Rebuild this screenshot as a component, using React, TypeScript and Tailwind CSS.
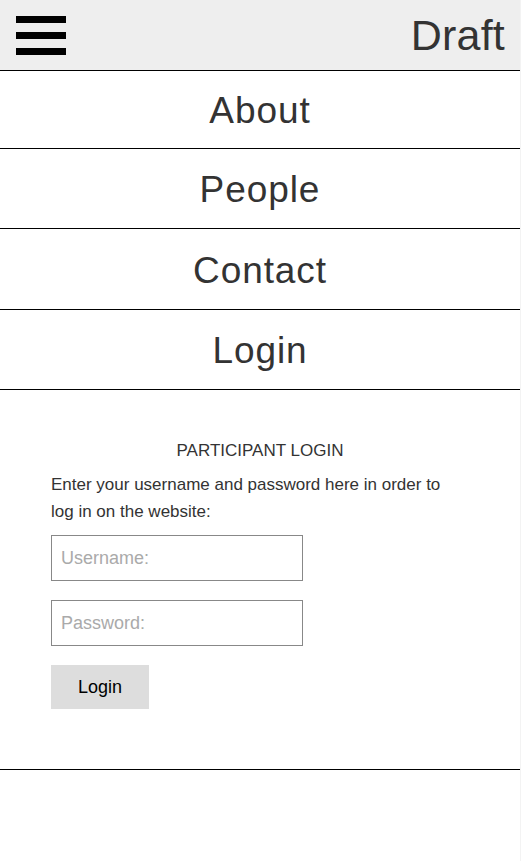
import React from 'react';

const navItems = [
  { label: 'About', h: 'h-[78px]' },
  { label: 'People', h: 'h-[80px]' },
  { label: 'Contact', h: 'h-[81px]' },
  { label: 'Login', h: 'h-[80px]' },
];

const App: React.FC = () => {
  return (
    <div className="min-h-[861px] bg-[#f3f3f3] font-['Liberation_Sans',Arial,sans-serif] text-[#333]">
      <div className="w-[520px] min-h-[861px] bg-white">
        <header className="h-[71px] bg-[#eeeeee] border-b border-black flex items-center justify-between pl-4 pr-[15px]">
          <button className="flex flex-col gap-[9px] w-[50px]" aria-label="Menu">
            <span className="block h-[7px] w-full bg-black" />
            <span className="block h-[7px] w-full bg-black" />
            <span className="block h-[7px] w-full bg-black" />
          </button>
          <span className="text-[43px] leading-none tracking-[0.005em] mt-[1px]">Draft</span>
        </header>

        <nav>
          {navItems.map((item) => (
            <a
              key={item.label}
              href="#"
              className={`flex ${item.h} items-center justify-center border-b border-black text-[37px] leading-none tracking-[0.025em] text-[#333] pt-[2px]`}
            >
              {item.label}
            </a>
          ))}
        </nav>

        <section className="border-b border-black px-[51px] pt-[50px] pb-[60px]">
          <h2 className="text-center text-[17px] leading-[21px] uppercase mb-[10px]">Participant Login</h2>
          <p className="text-[17px] leading-[27px] mb-[10px] pr-2">
            Enter your username and password here in order to log in on the website:
          </p>
          <form className="flex flex-col gap-[19px]" onSubmit={(e) => e.preventDefault()}>
            <input
              type="text"
              placeholder="Username:"
              className="w-[252px] h-[46px] border border-[#888] px-[9px] text-[18px] placeholder:text-[#aaa] outline-none"
            />
            <input
              type="password"
              placeholder="Password:"
              className="w-[252px] h-[46px] border border-[#888] px-[9px] text-[18px] placeholder:text-[#aaa] outline-none"
            />
            <button type="submit" className="w-[98px] h-[44px] bg-[#dddddd] text-[18px] text-black">
              Login
            </button>
          </form>
        </section>
      </div>
    </div>
  );
};

export default App;
